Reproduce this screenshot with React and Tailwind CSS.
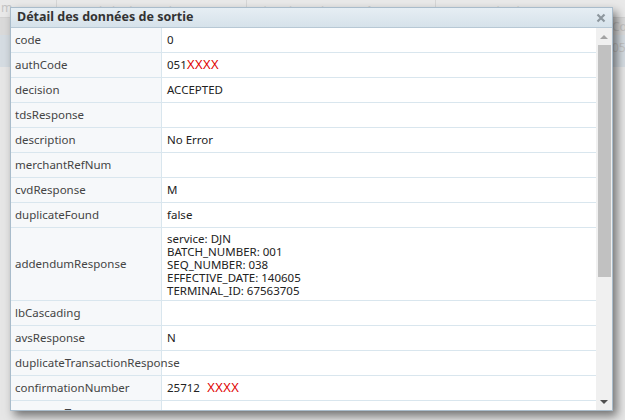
import React from 'react';

const rows = [
  { label: 'code', value: '0' },
  { label: 'authCode', value: '051', red: 'XXXX' },
  { label: 'decision', value: 'ACCEPTED' },
  { label: 'tdsResponse', value: '' },
  { label: 'description', value: 'No Error' },
  { label: 'merchantRefNum', value: '' },
  { label: 'cvdResponse', value: 'M' },
  { label: 'duplicateFound', value: 'false' },
  {
    label: 'addendumResponse',
    lines: [
      'service: DJN',
      'BATCH_NUMBER: 001',
      'SEQ_NUMBER: 038',
      'EFFECTIVE_DATE: 140605',
      'TERMINAL_ID: 67563705',
    ],
  },
  { label: 'lbCascading', value: '' },
  { label: 'avsResponse', value: 'N' },
  { label: 'duplicateTransactionResponse', value: '' },
  { label: 'confirmationNumber', value: '25712', red: 'XXXX', gap: true },
  { label: 'responseType', value: '' },
];

const bgHeaders = ['m', 'Type de la demande', 'Historique des requêtes', 'Communication'];

function Background() {
  return (
    <div className="absolute inset-0 flex flex-col bg-[#e6e6e6] text-[12px] text-[#c4c4c4]">
      <div className="flex h-[18px] border-b border-[#d2d2d2] bg-[#e9e9e9]">
        <div className="w-[56px] pl-[1px] leading-[16px]">{bgHeaders[0]}</div>
        {bgHeaders.slice(1).map((h) => (
          <div key={h} className="flex-1 border-l border-[#d6d6d6] pl-[8px] pt-[4px] leading-[16px] text-[#d0d0d0]">
            {h}
          </div>
        ))}
      </div>
      <div className="flex h-[17px] bg-[#dadada]">
        <div className="flex-1" />
        <div className="w-[14px] leading-[17px] pl-[1px]">Co</div>
      </div>
      <div className="flex h-[32px] bg-[#d5dce2]">
        <div className="flex-1" />
        <div className="w-[14px] leading-[26px] pl-[1px]">05</div>
      </div>
      <div className="flex-1" />
    </div>
  );
}

function Row({ row }) {
  const tall = !!row.lines;
  return (
    <div className="flex border-b border-[#d9e6ee]">
      <div
        className={`w-[151px] shrink-0 border-r border-[#d9e6ee] bg-[#f6f8fa] pl-[4px] text-[#444] whitespace-nowrap ${
          tall ? 'flex items-center' : 'h-[24px] leading-[24px]'
        }`}
      >
        {row.label}
      </div>
      <div className={`flex-1 pl-[5px] text-[#222] ${tall ? 'pt-[4px] pb-[3px] leading-[13px]' : 'h-[24px] leading-[24px]'}`}>
        {tall
          ? row.lines.map((l) => <div key={l}>{l}</div>)
          : (
            <>
              {row.value}
              {row.red && (
                <span
                  className={`text-[#e00000] text-[12px] ${row.gap ? 'ml-[7px]' : ''}`}
                  style={{ fontFamily: '"Liberation Sans", Arial, sans-serif' }}
                >
                  {row.red}
                </span>
              )}
            </>
          )}
      </div>
    </div>
  );
}

function Scrollbar() {
  return (
    <div className="w-[16px] shrink-0 bg-[#f0f0f0] flex flex-col items-center">
      <div className="h-[17px] flex items-center justify-center">
        <div className="w-0 h-0 border-l-[4px] border-r-[4px] border-b-[4px] border-l-transparent border-r-transparent border-b-[#a3a3a3]" />
      </div>
      <div className="w-[13px] h-[232px] bg-[#c1c1c1]" />
      <div className="flex-1" />
      <div className="h-[17px] flex items-center justify-center">
        <div className="w-0 h-0 border-l-[4px] border-r-[4px] border-t-[4px] border-l-transparent border-r-transparent border-t-[#505050]" />
      </div>
    </div>
  );
}

export default function App() {
  return (
    <div
      className="relative w-[625px] h-[420px] overflow-hidden"
      style={{ fontFamily: '"Noto Sans", "Open Sans", sans-serif' }}
    >
      <Background />
      <div className="absolute left-[10px] top-[7px] w-[603px] h-[404px] flex flex-col border border-[#a9bccb] bg-white shadow-[4px_5px_9px_rgba(0,0,0,0.5)]">
        <div className="h-[20px] shrink-0 flex items-center justify-between border-b border-[#b7c8d5] bg-gradient-to-b from-[#e6eef4] to-[#d6e2ea] pl-[6px] pr-[6px]">
          <span className="text-[12.5px] font-bold text-[#333]">Détail des données de sortie</span>
          <svg width="10" height="10" viewBox="0 0 10 10">
            <path d="M1.5 1.5 L8.5 8.5 M8.5 1.5 L1.5 8.5" stroke="#8d979e" strokeWidth="2.2" />
          </svg>
        </div>
        <div className="flex-1 flex min-h-0">
          <div className="flex-1 overflow-hidden text-[11.5px]">
            {rows.map((r) => (
              <Row key={r.label} row={r} />
            ))}
          </div>
          <Scrollbar />
        </div>
      </div>
    </div>
  );
}
